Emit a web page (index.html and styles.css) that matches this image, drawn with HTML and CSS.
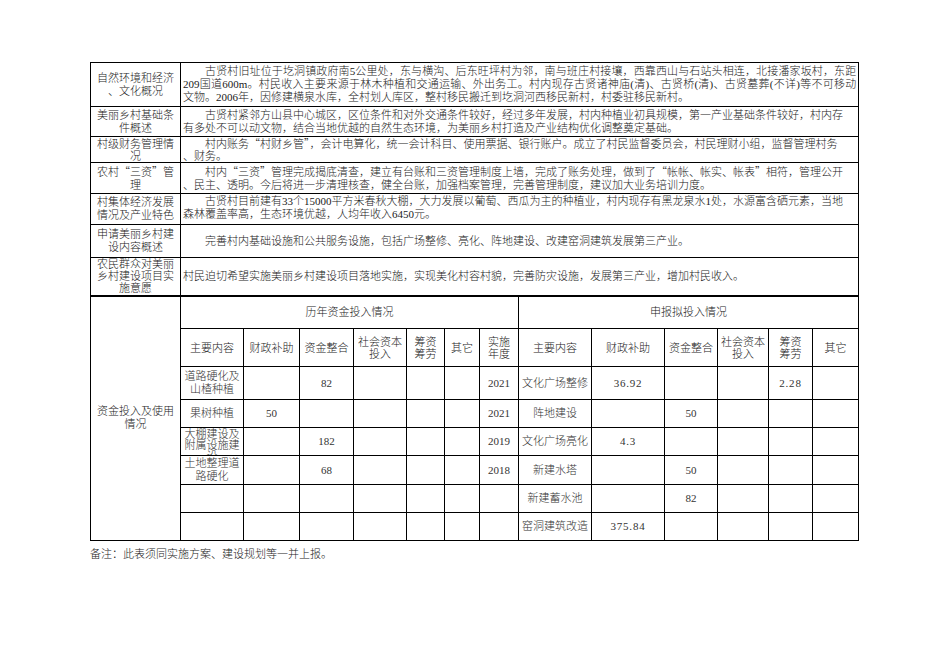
FILE: index.html
```html
<!DOCTYPE html>
<html lang="zh-CN">
<head>
<meta charset="utf-8">
<title>美丽乡村建设项目申报表</title>
<link rel="stylesheet" href="styles.css">
</head>
<body>
<div class="page">
<table class="sheet">
<colgroup>
<col class="c-lbl"><col class="c1"><col class="c2"><col class="c3"><col class="c4"><col class="c5"><col class="c6"><col class="c7"><col class="c8"><col class="c9"><col class="c10"><col class="c11"><col class="c12"><col class="c13">
</colgroup>
<tr class="h44">
<td class="lbl">自然环境和经济<br>、文化概况</td>
<td class="txt" colspan="13"><span class="ln ind j">古贤村旧址位于圪洞镇政府南5公里处，东与横沟、后东旺坪村为邻，南与班庄村接壤，西靠西山与石站头相连，北接潘家坂村，东距</span><span class="ln j">209国道600m。村民收入主要来源于林木种植和交通运输、外出务工。村内现存古贤诸神庙(清)、古贤桥(清)、古贤墓葬(不详)等不可移动</span><span class="ln">文物。2006年，因修建横泉水库，全村划人库区，整村移民搬迁到圪洞河西移民新村，村委驻移民新村。</span></td>
</tr>
<tr class="h30">
<td class="lbl">美丽乡村基础条<br>件概述</td>
<td class="txt" colspan="13"><span class="ln ind">古贤村紧邻方山县中心城区，区位条件和对外交通条件较好，经过多年发展，村内种植业初具规模，第一产业基础条件较好，村内存</span><span class="ln">有多处不可以动文物，结合当地优越的自然生态环境，为美丽乡村打造及产业结构优化调整奠定基础。</span></td>
</tr>
<tr class="h25 tight">
<td class="lbl">村级财务管理情<br>况</td>
<td class="txt" colspan="13"><span class="ln ind">村内账务<span class="q">“</span>村财乡管<span class="q">”</span>，会计电算化，统一会计科目、使用票据、银行账户。成立了村民监督委员会，村民理财小组，监督管理村务</span><span class="ln">、财务。</span></td>
</tr>
<tr class="h31">
<td class="lbl">农村<span class="q">“</span>三资<span class="q">”</span>管<br>理</td>
<td class="txt" colspan="13"><span class="ln ind">村内<span class="q">“</span>三资<span class="q">”</span>管理完成揭底清查，建立有台账和三资管理制度上墙，完成了账务处理，做到了<span class="q">“</span>帐帐、帐实、帐表<span class="q">”</span>相符，管理公开</span><span class="ln">、民主、透明。今后将进一步清理核查，健全台账，加强档案管理，完善管理制度，建议加大业务培训力度。</span></td>
</tr>
<tr class="h31">
<td class="lbl">村集体经济发展<br>情况及产业特色</td>
<td class="txt top" colspan="13"><span class="ln ind">古贤村目前建有33个15000平方米春秋大棚，大力发展以葡萄、西瓜为主的种植业，村内现存有黑龙泉水1处，水源富含硒元素，当地</span><span class="ln">森林覆盖率高，生态环境优越，人均年收入6450元。</span></td>
</tr>
<tr class="h33">
<td class="lbl">申请美丽乡村建<br>设内容概述</td>
<td class="txt" colspan="13"><span class="ln ind">完善村内基础设施和公共服务设施，包括广场整修、亮化、阵地建设、改建窑洞建筑发展第三产业。</span></td>
</tr>
<tr class="h38">
<td class="lbl three">农民群众对美丽<br>乡村建设项目实<br>施意愿</td>
<td class="txt" colspan="13"><span class="ln">村民迫切希望实施美丽乡村建设项目落地实施，实现美化村容村貌，完善防灾设施，发展第三产业，增加村民收入。</span></td>
</tr>

<tr class="h33 sep">
<td class="lbl" rowspan="8">资金投入及使用<br>情况</td>
<td class="sec" colspan="7">历年资金投入情况</td>
<td class="sec" colspan="6">申报拟投入情况</td>
</tr>
<tr class="h38 heads">
<td>主要内容</td><td>财政补助</td><td>资金整合</td><td>社会资本<br>投入</td><td>筹资<br>筹劳</td><td>其它</td><td>实施<br>年度</td>
<td>主要内容</td><td>财政补助</td><td>资金整合</td><td>社会资本<br>投入</td><td>筹资<br>筹劳</td><td>其它</td>
</tr>
<tr class="h33 data">
<td class="two">道路硬化及<br>山楂种植</td><td></td><td>82</td><td></td><td></td><td></td><td>2021</td>
<td>文化广场整修</td><td class="num">36.92</td><td></td><td></td><td class="num">2.28</td><td></td>
</tr>
<tr class="h28 data">
<td>果树种植</td><td>50</td><td></td><td></td><td></td><td></td><td>2021</td>
<td>阵地建设</td><td></td><td>50</td><td></td><td></td><td></td>
</tr>
<tr class="h28 data">
<td class="top"><div class="clip">大棚建设及<br>附属设施建<br>设</div></td><td></td><td>182</td><td></td><td></td><td></td><td>2019</td>
<td>文化广场亮化</td><td class="num">4.3</td><td></td><td></td><td></td><td></td>
</tr>
<tr class="h29 data">
<td class="two">土地整理道<br>路硬化</td><td></td><td>68</td><td></td><td></td><td></td><td>2018</td>
<td>新建水塔</td><td></td><td>50</td><td></td><td></td><td></td>
</tr>
<tr class="h28 data">
<td></td><td></td><td></td><td></td><td></td><td></td><td></td>
<td>新建蓄水池</td><td></td><td>82</td><td></td><td></td><td></td>
</tr>
<tr class="h28 data">
<td></td><td></td><td></td><td></td><td></td><td></td><td></td>
<td>窑洞建筑改造</td><td class="num">375.84</td><td></td><td></td><td></td><td></td>
</tr>
</table>
<p class="note">备注：此表须同实施方案、建设规划等一并上报。</p>
</div>
</body>
</html>
```

FILE: styles.css
```css
html, body {
  margin: 0;
  padding: 0;
  background: #ffffff;
}

body {
  color: #1a1a1a;
  font-family: "Liberation Serif", "Noto Sans CJK SC", serif;
  font-size: 11px;
  line-height: 13px;
  font-weight: 300;
}

.page {
  padding: 62px 0 0 90px;
}

.sheet {
  border-collapse: collapse;
  table-layout: fixed;
  width: 768px;
}

.c-lbl { width: 90px; }
.c1 { width: 63px; }
.c2 { width: 56px; }
.c3 { width: 54px; }
.c4 { width: 53px; }
.c5 { width: 38px; }
.c6 { width: 35px; }
.c7 { width: 39px; }
.c8 { width: 73px; }
.c9 { width: 73px; }
.c10 { width: 53px; }
.c11 { width: 51px; }
.c12 { width: 44px; }
.c13 { width: 46px; }

.sheet td {
  border: 1px solid #000000;
  padding: 0 2px;
  vertical-align: middle;
  overflow: hidden;
  font-weight: 300;
}

.h44 { height: 44px; }
.h38 { height: 38px; }
.h33 { height: 33px; }
.h31 { height: 31px; }
.h30 { height: 30px; }
.h29 { height: 29px; }
.h28 { height: 28px; }
.h25 { height: 25px; }

.tight td {
  line-height: 12px;
}

.lbl {
  text-align: center;
  white-space: nowrap;
}

.lbl.three {
  line-height: 12px;
}

.txt {
  text-align: left;
}

.txt.top {
  vertical-align: top;
  padding-top: 1px;
}

.ln {
  display: block;
  white-space: nowrap;
}

.ln.ind {
  text-indent: 22px;
}

.ln.j {
  white-space: normal;
  text-align: justify;
  text-align-last: justify;
}

.q {
  font-family: "Noto Sans CJK SC", sans-serif;
}

.sep td {
  border-top: 2px solid #000000;
}

.sec {
  text-align: center;
}

.heads td {
  text-align: center;
  line-height: 12px;
  white-space: nowrap;
  padding: 0;
}

.data td {
  text-align: center;
  white-space: nowrap;
  padding: 0;
  color: #333333;
}

.data td.two {
  line-height: 13px;
}

.data td.top {
  vertical-align: top;
}

.clip {
  height: 26px;
  overflow: hidden;
  line-height: 11px;
  padding-top: 1px;
}

.num {
  letter-spacing: 0.8px;
}

.note {
  margin: 7px 0 0 0;
  line-height: 13px;
}
```
